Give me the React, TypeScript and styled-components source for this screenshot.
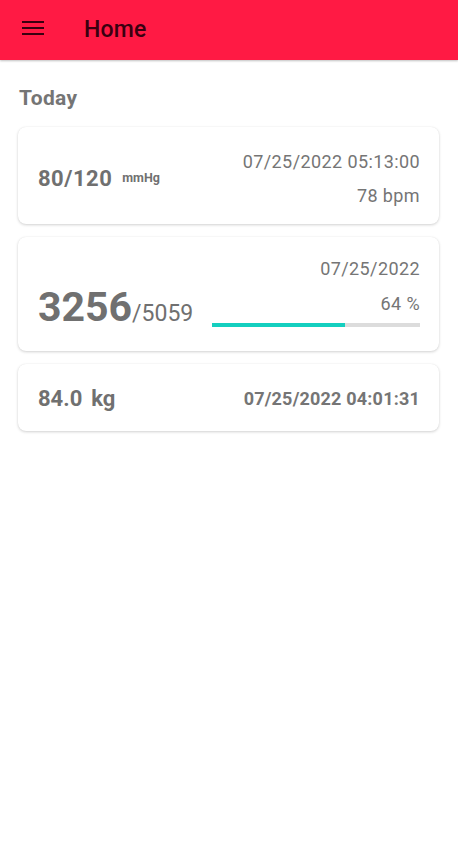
import React from "react";
import styled, { createGlobalStyle } from "styled-components";

const GlobalStyle = createGlobalStyle`
  html, body {
    margin: 0;
    padding: 0;
    background: #ffffff;
    font-family: Roboto, "Noto Sans", Arial, sans-serif;
  }
`;

const Page = styled.div`
  width: 458px;
  min-height: 854px;
  background: #ffffff;
`;

const AppBar = styled.header`
  height: 60px;
  background: #ff1a44;
  display: flex;
  align-items: center;
  padding-left: 22px;
  box-shadow: 0 1px 2px rgba(0, 0, 0, 0.25);
`;

const MenuButton = styled.div`
  width: 22px;
  height: 14px;
  display: flex;
  flex-direction: column;
  justify-content: space-between;
  margin: 0 40px 5px 0;
`;

const MenuLine = styled.span`
  display: block;
  height: 2px;
  width: 22px;
  background: #3a0010;
`;

const Title = styled.h1`
  margin: 0 0 1px;
  font-size: 23px;
  font-weight: 500;
  color: #3a0010;
  letter-spacing: 0.2px;
`;

const Content = styled.main`
  padding: 26px 19px 0 18px;
  display: flex;
  flex-direction: column;
  gap: 13px;
`;

const SectionTitle = styled.h2`
  margin: 0 0 4px 1px;
  font-size: 21px;
  font-weight: 700;
  letter-spacing: 0.4px;
  color: #757575;
`;

const Card = styled.section<{ $height: number; $top?: boolean; $offset?: number }>`
  height: ${(p) => p.$height}px;
  box-sizing: border-box;
  background: #ffffff;
  border-radius: 8px;
  box-shadow: 0 1px 3px rgba(0, 0, 0, 0.18), 0 0 1px rgba(0, 0, 0, 0.08);
  padding: ${(p) => p.$offset ?? 0}px 19px 0 20px;
  display: flex;
  align-items: ${(p) => (p.$top ? "flex-start" : "center")};
  justify-content: space-between;
  color: #757575;
`;

const Value = styled.span<{ $tight?: boolean }>`
  font-size: 22px;
  font-weight: 700;
  letter-spacing: ${(p) => (p.$tight ? 0 : 0.5)}px;
  color: #707070;
`;

const Unit = styled.sup`
  font-size: 12.5px;
  font-weight: 700;
  letter-spacing: 0;
  margin-left: 10px;
  vertical-align: 4px;
`;

const WeightUnit = styled.span`
  margin-left: 9px;
`;

const RightCol = styled.div<{ $gap: number }>`
  display: flex;
  flex-direction: column;
  align-items: flex-end;
  gap: ${(p) => p.$gap}px;
`;

const Meta = styled.span<{ $bold?: boolean }>`
  font-size: 18px;
  line-height: 21px;
  font-weight: ${(p) => (p.$bold ? 700 : 400)};
  letter-spacing: ${(p) => (p.$bold ? 0.2 : 0.4)}px;
  color: #757575;
`;

const Steps = styled.div`
  display: flex;
  align-items: baseline;
  margin-top: 46px;
  color: #707070;
`;

const StepsBig = styled.span`
  font-size: 41px;
  line-height: 48px;
  font-weight: 700;
`;

const StepsGoal = styled.span`
  font-size: 23px;
  font-weight: 400;
`;

const StepsRight = styled.div`
  width: 208px;
  display: flex;
  flex-direction: column;
  align-items: flex-end;
  gap: 14px;
  margin-top: 21px;
`;

const Track = styled.div`
  width: 100%;
  height: 4px;
  background: #dcdcdc;
  margin-top: -5px;
`;

const Fill = styled.div`
  height: 100%;
  background: #14cfbf;
`;

export default function App() {
  const steps = 3256;
  const goal = 5059;
  const pct = Math.round((steps / goal) * 100);
  return (
    <Page>
      <GlobalStyle />
      <AppBar>
        <MenuButton>
          <MenuLine />
          <MenuLine />
          <MenuLine />
        </MenuButton>
        <Title>Home</Title>
      </AppBar>
      <Content>
        <SectionTitle>Today</SectionTitle>
        <Card $height={97} $offset={5}>
          <Value>
            80/120<Unit>mmHg</Unit>
          </Value>
          <RightCol $gap={13}>
            <Meta>07/25/2022 05:13:00</Meta>
            <Meta>78 bpm</Meta>
          </RightCol>
        </Card>
        <Card $height={114} $top>
          <Steps>
            <StepsBig>{steps}</StepsBig>
            <StepsGoal>/{goal}</StepsGoal>
          </Steps>
          <StepsRight>
            <Meta>07/25/2022</Meta>
            <Meta>{pct} %</Meta>
            <Track>
              <Fill style={{ width: `${pct}%` }} />
            </Track>
          </StepsRight>
        </Card>
        <Card $height={67} $offset={2}>
          <Value $tight>
            84.0<WeightUnit>kg</WeightUnit>
          </Value>
          <Meta $bold>07/25/2022 04:01:31</Meta>
        </Card>
      </Content>
    </Page>
  );
}
